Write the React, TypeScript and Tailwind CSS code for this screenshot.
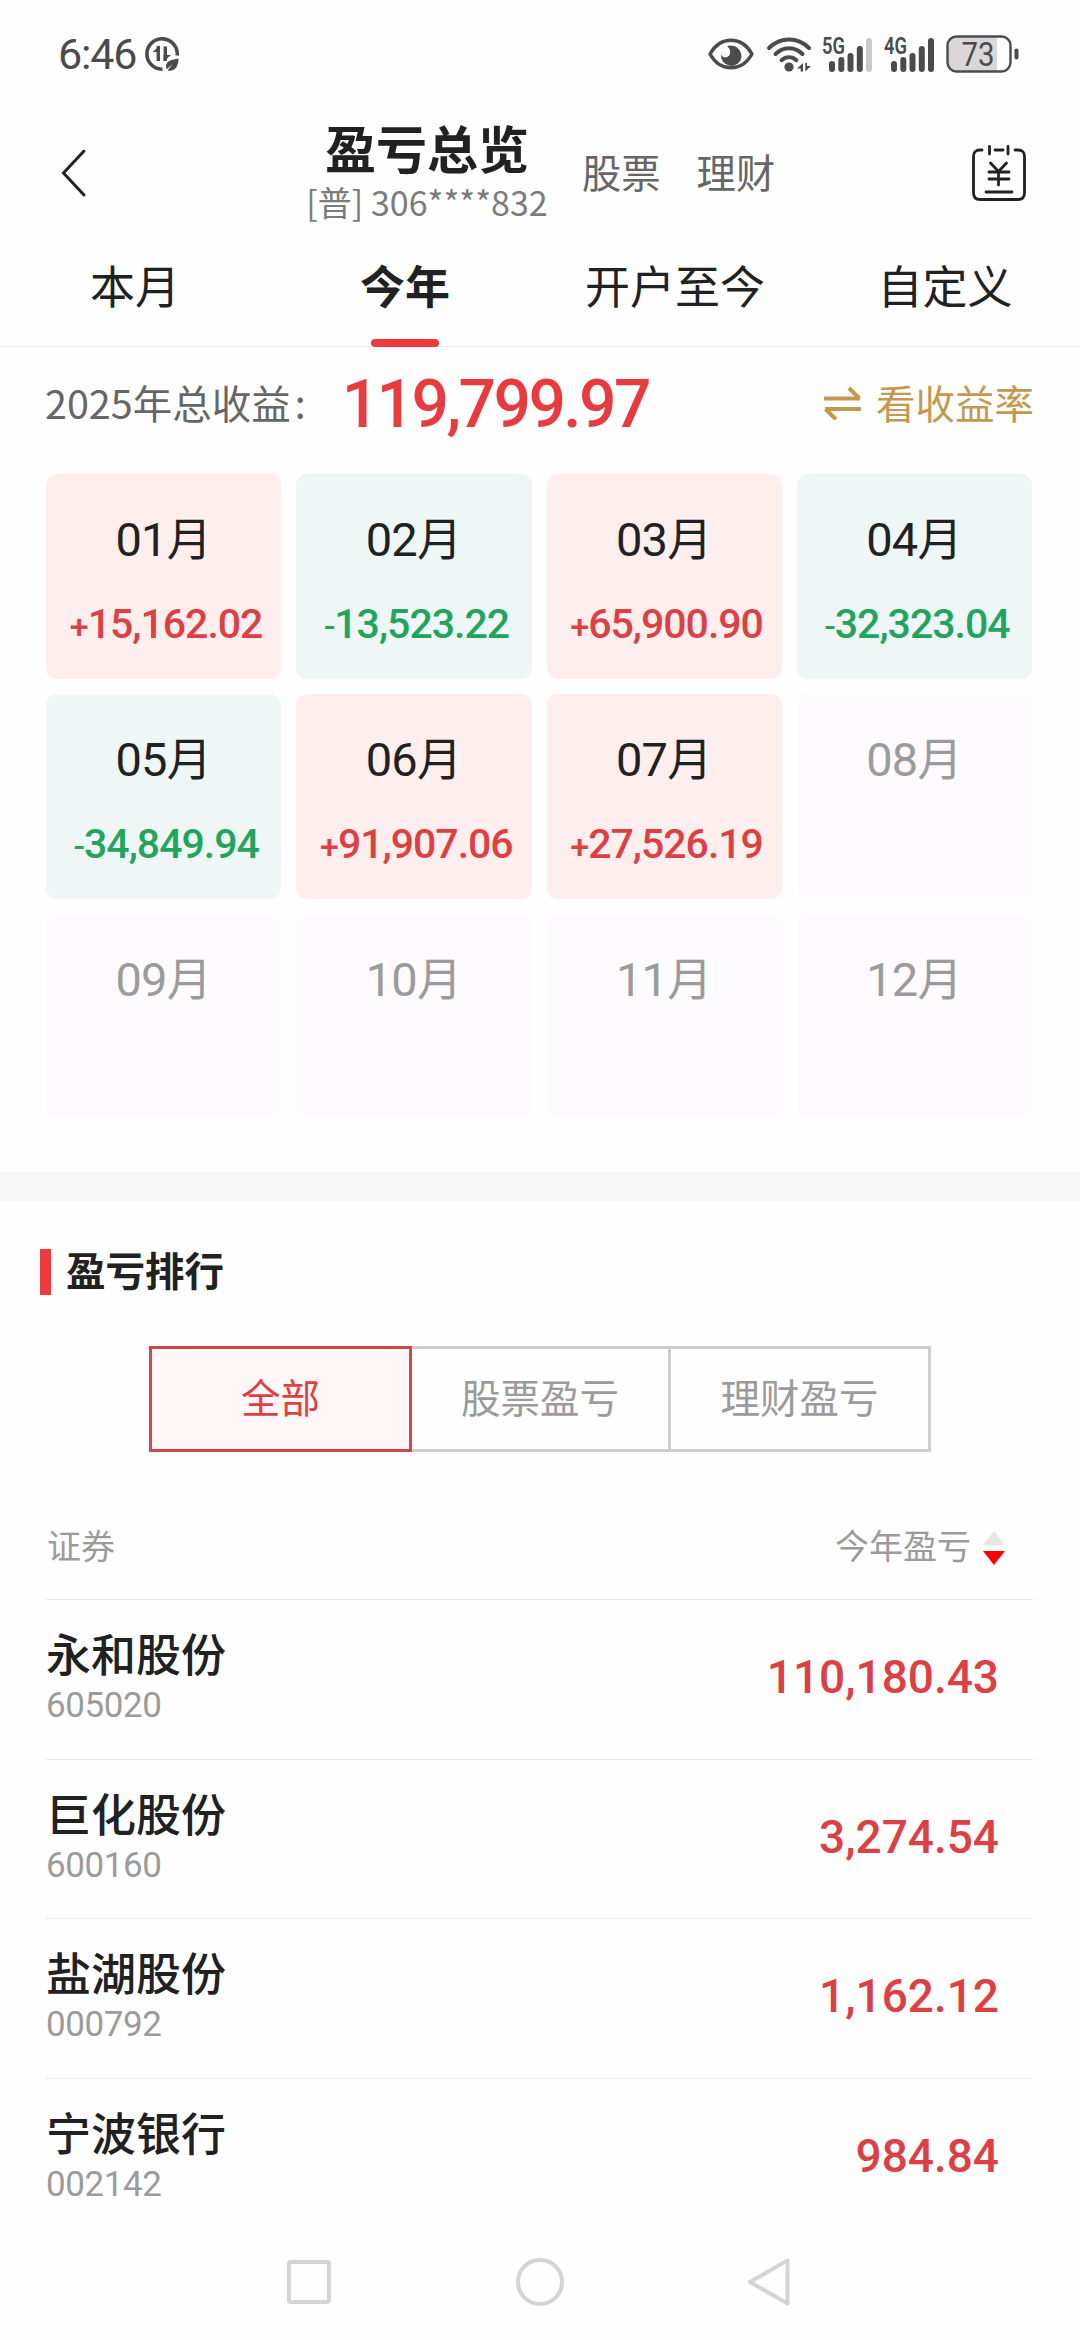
import { clsx } from "clsx";

const tabs = ["本月", "今年", "开户至今", "自定义"];

const months = [
 { name: "01", value: "+15,162.02" },
 { name: "02", value: "-13,523.22" },
 { name: "03", value: "+65,900.90" },
 { name: "04", value: "-32,323.04" },
 { name: "05", value: "-34,849.94" },
 { name: "06", value: "+91,907.06" },
 { name: "07", value: "+27,526.19" },
 { name: "08" },
 { name: "09" },
 { name: "10" },
 { name: "11" },
 { name: "12" },
];

const stocks = [
 { name: "永和股份", code: "605020", profit: "110,180.43" },
 { name: "巨化股份", code: "600160", profit: "3,274.54" },
 { name: "盐湖股份", code: "000792", profit: "1,162.12" },
 { name: "宁波银行", code: "002142", profit: "984.84" },
];

function Signal({ label, last }: { label: string; last: string }) {
 return (
  <svg width="51" height="56" viewBox="0 -10 51 56" fill="#4b4b4b">
   <text
    x="0"
    y="17.5"
    fontSize="23"
    fontWeight="600"
    textLength="23"
    lengthAdjust="spacingAndGlyphs"
    fontFamily="Roboto, sans-serif"
   >
    {label}
   </text>
   <rect x="7" y="25" width="6" height="11" rx="3" />
   <rect x="16.3" y="21" width="6" height="15" rx="3" />
   <rect x="25.5" y="17" width="6" height="19" rx="3" />
   <rect x="34.8" y="10" width="6" height="26" rx="3" />
   <rect x="44" y="2" width="6" height="34" rx="3" fill={last} />
  </svg>
 );
}

function StatusBar() {
 return (
  <div className="h-[108px] shrink-0 flex items-center pl-[58px] pr-[60px]">
   <span className="pt-px font-[Roboto] text-[43px] leading-none tracking-[-1.2px] text-[#4b4b4b]">
    6:46
   </span>
   <svg className="ml-[8px]" width="36" height="36" viewBox="0 0 36 36" fill="none">
    <path
     d="M33.2 19.5A15.2 15.2 0 1 0 18.5 33.2"
     stroke="#4b4b4b"
     strokeWidth="3.6"
    />
    <path d="M14.3 10V25M21.3 10.5V25" stroke="#4b4b4b" strokeWidth="3.4" />
    <path d="M16 9.5L8.5 16H16ZM19.6 25.5L27 19H19.6Z" fill="#4b4b4b" />
    <path
     d="M34.5 22.5C28 23.5 22 25 22 30.5C22 31.5 22.3 32.4 22.8 33.2L28.5 28L23.6 34.4C30.5 35.8 34.5 31 34.5 22.5Z"
     fill="#4b4b4b"
    />
   </svg>

   <div className="ml-auto flex items-center">
    {/* 护眼模式 */}
    <svg width="46" height="34" viewBox="0 0 46 34" fill="none">
     <path
      d="M2 17C7 8 14.5 3.2 23 3.2S39 8 44 17C39 26 31.5 30.8 23 30.8S7 26 2 17Z"
      stroke="#4b4b4b"
      strokeWidth="3.4"
      strokeLinejoin="round"
     />
     <path
      d="M19 9.2C26.5 6.8 33.5 11.8 33.5 19.9A10.3 10.3 0 1 1 13 17.2C14 19.8 16.5 21 19 20C23.5 18 23.2 12 19 9.2Z"
      fill="#4b4b4b"
     />
    </svg>
    <svg className="ml-[12px]" width="46" height="36" viewBox="0 0 46 36" fill="none">
     <g stroke="#4b4b4b" strokeWidth="4" strokeLinecap="round">
      <path d="M3 12C14.5 0.7 31.5 0.7 43 12" />
      <path d="M9.5 18C17.5 10.3 28.5 10.3 36.5 18" />
      <path d="M15.5 24.2C20 20.3 26 20.3 30.5 24.2" />
     </g>
     <circle cx="23" cy="31" r="4.6" fill="#4b4b4b" />
     <path d="M31 32.5L37 27V35.5H34.7V32.5ZM39.3 35.5V27H41V30H45Z" fill="#4b4b4b" />
    </svg>
    <div className="ml-[10px] flex items-center gap-[11px]">
     <Signal label="5G" last="#cbc9cb" />
     <Signal label="4G" last="#4b4b4b" />
    </div>
    <svg className="ml-[11px]" width="74" height="38" viewBox="0 0 74 38">
     <path d="M10 2H51V36H10Q2 36 2 28V10Q2 2 10 2Z" fill="#dad6da" />
     <rect
      x="1.5"
      y="1.5"
      width="63"
      height="35"
      rx="9"
      fill="none"
      stroke="#4b4b4b"
      strokeWidth="2.4"
     />
     <rect x="68.5" y="13.5" width="4" height="11" rx="2" fill="#4b4b4b" />
     <text
      x="15.5"
      y="30.5"
      fontSize="33"
      textLength="33"
      lengthAdjust="spacingAndGlyphs"
      fontFamily="Roboto, sans-serif"
      fill="#4b4b4b"
     >
      73
     </text>
    </svg>
   </div>
  </div>
 );
}

function Header() {
 return (
  <div className="h-[130px] shrink-0 flex items-center pl-[60px] pr-[53px]">
   <svg width="27" height="50" viewBox="0 0 27 50" fill="none">
    <path
     d="M24 3L3.5 25L24 47"
     stroke="#212121"
     strokeWidth="3"
     strokeLinecap="round"
    />
   </svg>
   <div className="ml-[218px] w-[244px] flex flex-col items-center">
    <div className="text-[51px] leading-[48px] font-bold">盈亏总览</div>
    <div className="mt-[8px] text-[34px] leading-[45px] whitespace-nowrap text-[#7b7b7b]">
     [普] 306****832
    </div>
   </div>
   <div className="ml-[33px] pb-[5px] flex gap-[36px] text-[39.3px] leading-none text-[#666]">
    <span>股票</span>
    <span>理财</span>
   </div>
   <svg className="ml-auto" width="56" height="58" viewBox="0 0 56 58" fill="none">
    <g stroke="#212121" strokeWidth="2.8" strokeLinecap="round">
     <path d="M11 6H9Q2.5 6 2.5 12.5V49Q2.5 55.5 9 55.5H47Q53.5 55.5 53.5 49V12.5Q53.5 6 47 6H44" />
     <path d="M18.5 2.5V10M37 2.5V10M24 6H32" />
     <path d="M19.5 19L27.5 27.5L35.5 19M27.5 27.5V41M18 28H38M18 35H38M15 48H41" />
    </g>
   </svg>
  </div>
 );
}

function Tabs() {
 return (
  <div className="h-[109px] shrink-0 grid grid-cols-4 border-b border-[#ebebeb]">
   {tabs.map((tab, index) => (
    <div
     key={tab}
     className={clsx(
      "relative flex items-center justify-center pb-4 text-[45px] leading-none",
      index === 1 && "font-bold",
     )}
    >
     {tab}
     {index === 1 && (
      <div className="absolute -bottom-px left-[101px] h-2 w-[68px] rounded-full bg-[#ec3a3e]" />
     )}
    </div>
   ))}
  </div>
 );
}

function MonthCard({ name, value }: { name: string; value?: string }) {
 const isUp = value?.startsWith("+");
 return (
  <div
   className={clsx(
    "h-[205px] rounded-[11px] flex flex-col items-center pt-[41px]",
    !value && "bg-[#fefbfe] text-[#9b9b9b]",
    value && (isUp ? "bg-[#ffeeee]" : "bg-[#eef7f6]"),
   )}
  >
   <div className="h-[48px] flex items-center text-[45px] leading-none">
    <span className="pt-px font-[Roboto] text-[47px] tracking-[-0.8px]">{name}</span>
    <span className="pb-[5px]">月</span>
   </div>
   {value && (
    <div
     className={clsx(
      "mt-[39px] ml-[5px] font-[Roboto] text-[41px] leading-[44px] font-medium tracking-[-1px]",
      isUp ? "text-[#dd4044]" : "text-[#22a45d]",
     )}
    >
     <span className="text-[34px]">{value[0]}</span>
     {value.slice(1)}
    </div>
   )}
  </div>
 );
}

function Ranking() {
 return (
  <>
   <div className="mt-12 ml-10 h-[46px] flex items-center">
    <div className="h-full w-[11px] bg-[#f03a3c]" />
    <span className="ml-[15px] pb-[7px] text-[39.5px] leading-none font-bold">盈亏排行</span>
   </div>

   <div className="mt-[51px] mx-[149px] h-[106px] shrink-0 flex text-[39.5px] leading-none text-[#9b9b9b]">
    <div className="w-[263px] border-3 border-[#cd474b] bg-[#fff6f7] text-[#dd4044] flex items-center justify-center pb-1.5">
     全部
    </div>
    <div className="w-[256px] border-y-3 border-[#cdcdcd] flex items-center justify-center pb-1.5">
     股票盈亏
    </div>
    <div className="flex-1 border-3 border-[#cdcdcd] flex items-center justify-center pb-1.5">
     理财盈亏
    </div>
   </div>

   <div className="mt-10 ml-[46px] mr-[47px] h-[108px] shrink-0 flex items-center justify-between border-b border-[#e9e9e9] pr-7 text-[34px] leading-none text-[#9b9b9b]">
    <span className="pl-px pb-0.5">证券</span>
    <div className="flex items-center gap-3">
     <span className="pb-0.5">今年盈亏</span>
     <svg className="mt-1.5" width="22" height="35" viewBox="0 0 22 35">
      <path d="M11 0L22 14H0Z" fill="#e6e6e6" />
      <path d="M11 34L22 20H0Z" fill="#fb0000" />
     </svg>
    </div>
   </div>

   <div className="ml-[46px] mr-[47px] flex-1 overflow-hidden">
    {stocks.map((stock, index) => (
     <div
      key={stock.code}
      className={clsx(
       "h-[159.5px] flex items-center justify-between pr-[34px]",
       index < stocks.length - 1 && "border-b border-[#e9e9e9]",
      )}
     >
      <div>
       <div className="pb-[9px] text-[45px] leading-[45px] font-medium">{stock.name}</div>
       <div className="font-[Roboto] text-[35px] leading-[44px] tracking-[-0.4px] text-[#9b9b9b]">
        {stock.code}
       </div>
      </div>
      <span className="pb-1 font-[Roboto] text-[46px] leading-none font-medium text-[#dd4044]">
       {stock.profit}
      </span>
     </div>
    ))}
   </div>
  </>
 );
}

function NavBar() {
 return (
  <div className="h-[116px] shrink-0 flex items-center justify-center gap-[183px]">
   <svg width="48" height="48" viewBox="0 0 48 48" fill="none" stroke="#d6d3d6" strokeWidth="4">
    <rect x="4" y="4" width="40" height="40" rx="2" />
   </svg>
   <svg width="48" height="48" viewBox="0 0 48 48" fill="none" stroke="#d6d3d6" strokeWidth="4">
    <circle cx="24" cy="24" r="22" />
   </svg>
   <svg width="48" height="48" viewBox="0 0 48 48" fill="none" stroke="#d6d3d6" strokeWidth="4">
    <path d="M40.5 2.5V45.5L3 24Z" strokeLinejoin="round" />
   </svg>
  </div>
 );
}

export default function App() {
 return (
  <div className="w-[1080px] h-[2340px] overflow-hidden flex flex-col bg-[#fefefe] text-[#212121] font-['Noto_Sans_CJK_SC',sans-serif]">
   <StatusBar />
   <Header />
   <Tabs />

   <div className="h-[112px] shrink-0 flex items-center pl-[45px] pr-[46px] text-[39.5px] leading-none">
    <div className="pb-[3px] flex text-[#666]">
     2025年总收益<span className="ml-1">:</span>
    </div>
    <span className="mt-1 ml-[36px] font-[Roboto] text-[66px] font-medium tracking-[-2.6px] text-[#e83b3f]">
     119,799.97
    </span>
    <div className="ml-auto flex items-center gap-[15px] text-[#c59850]">
     <svg width="37" height="34" viewBox="0 0 37 34" fill="none" stroke="#c59850" strokeWidth="4">
      <path d="M0 12.5H36M25 2L35.5 12.5M37 23H1M12 33.5L1.5 23" />
     </svg>
     <span className="pb-[3px]">看收益率</span>
    </div>
   </div>

   {/* 月度收益 */}
   <div className="mt-[15px] mb-[53px] ml-[46px] mr-[48px] grid grid-cols-4 gap-[15px]">
    {months.map((month) => (
     <MonthCard key={month.name} name={month.name} value={month.value} />
    ))}
   </div>

   <div className="h-[29px] shrink-0 bg-[#f7f7f7]" />

   <Ranking />
   <NavBar />
  </div>
 );
}
